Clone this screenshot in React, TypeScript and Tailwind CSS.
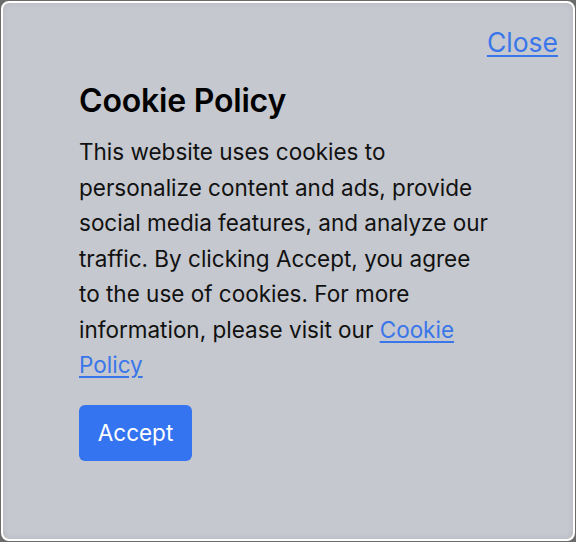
export default function App() {
  return (
    <div className="h-[542px] w-[576px] bg-[#6b6b6b] p-[1px]" style={{ fontFamily: "Inter, 'Noto Sans', sans-serif" }}>
      <div className="relative flex h-full flex-col rounded-lg border-2 border-white bg-[#c5c8ce] shadow-[inset_0_0_6px_rgba(0,0,0,0.08)]">
        <div className="flex justify-end pr-[15px] pt-[21px]">
          <a href="#" className="text-[26.5px] leading-[36px] text-[#3a76ea] underline underline-offset-[3px]">
            Close
          </a>
        </div>
        <div className="mx-auto mt-[20px] w-[418px]">
          <h2 className="text-[32px] font-semibold leading-[42px] tracking-[-0.2px] text-black">Cookie Policy</h2>
          <p className="mt-[12px] text-[22.5px] leading-[35.5px] text-[#111]">
            This website uses cookies to personalize content and ads, provide social media features, and analyze our
            traffic. By clicking Accept, you agree to the use of cookies. For more information, please visit our{" "}
            <a href="#" className="text-[#3a76ea] underline underline-offset-[3px]">
              Cookie Policy
            </a>
          </p>
          <button className="mt-[22px] h-[56px] w-[113px] rounded-md bg-[#3574f0] text-[22.5px] text-white">
            Accept
          </button>
        </div>
      </div>
    </div>
  );
}
